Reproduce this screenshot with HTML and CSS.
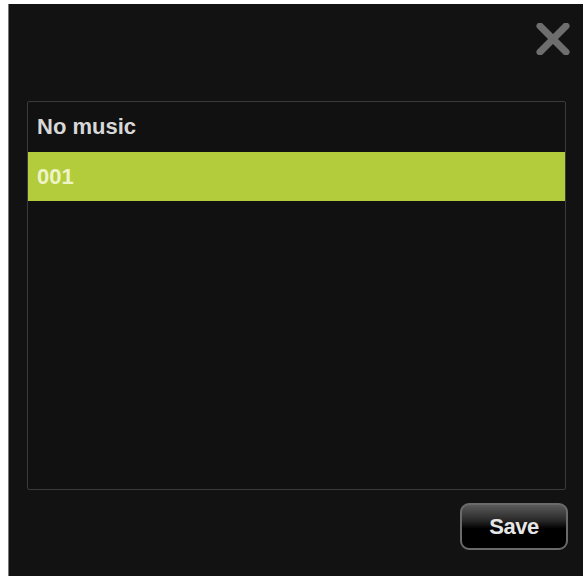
FILE: index.html
```html
<!DOCTYPE html>
<html>
<head>
<meta charset="utf-8">
<link rel="stylesheet" href="styles.css">
</head>
<body>
<div class="panel">
  <div class="header">
    <button class="close" aria-label="Close">
      <svg width="36" height="32" viewBox="0 0 36 32">
        <path d="M5 3 L31 29 M31 3 L5 29" stroke="#6e6e6e" stroke-width="7" stroke-linecap="round"/>
      </svg>
    </button>
  </div>
  <div class="list">
    <div class="item">No music</div>
    <div class="item selected">001</div>
  </div>
  <div class="footer">
    <button class="save">Save</button>
  </div>
</div>
</body>
</html>
```
FILE: styles.css
```css
html, body {
  margin: 0;
  padding: 0;
  background: #ffffff;
}
body {
  padding: 4px 4px 2px 8px;
  font-family: "Liberation Sans", Arial, sans-serif;
}
.panel {
  width: 575px;
  height: 572px;
  background: #121212;
  box-sizing: border-box;
  border-left: 1px solid #777;
  display: flex;
  flex-direction: column;
  padding: 0 15px 0 18px;
}
.header {
  height: 97px;
  display: flex;
  justify-content: flex-end;
  align-items: flex-start;
  padding-top: 19px;
  box-sizing: border-box;
  margin-right: -3px;
}
.close {
  background: none;
  border: 0;
  padding: 0;
  display: block;
  cursor: pointer;
}
.close svg { display: block; }
.list {
  height: 389px;
  box-sizing: border-box;
  border: 1px solid #3b3b3b;
  border-radius: 2px;
  background: #111111;
  margin-right: 2px;
}
.item {
  height: 50px;
  box-sizing: border-box;
  padding: 13px 0 0 9px;
  font-size: 22px;
  font-weight: bold;
  color: #d8d8d8;
  line-height: 24px;
}
.item.selected {
  height: 49px;
  background: #b3cc3c;
  color: #eef4c8;
  padding-top: 13px;
}
.footer {
  display: flex;
  justify-content: flex-end;
  padding-top: 13px;
}
.save {
  width: 108px;
  height: 47px;
  border: 2px solid #6a6a6a;
  border-radius: 9px;
  background: linear-gradient(to bottom, #5a5a5a 0%, #2a2a2a 35%, #000 55%, #000 100%);
  color: #e6e6e6;
  font-family: "Liberation Sans", Arial, sans-serif;
  font-size: 22px;
  font-weight: bold;
  letter-spacing: -0.5px;
  padding: 0;
  margin-right: 0;
  cursor: pointer;
}
```
